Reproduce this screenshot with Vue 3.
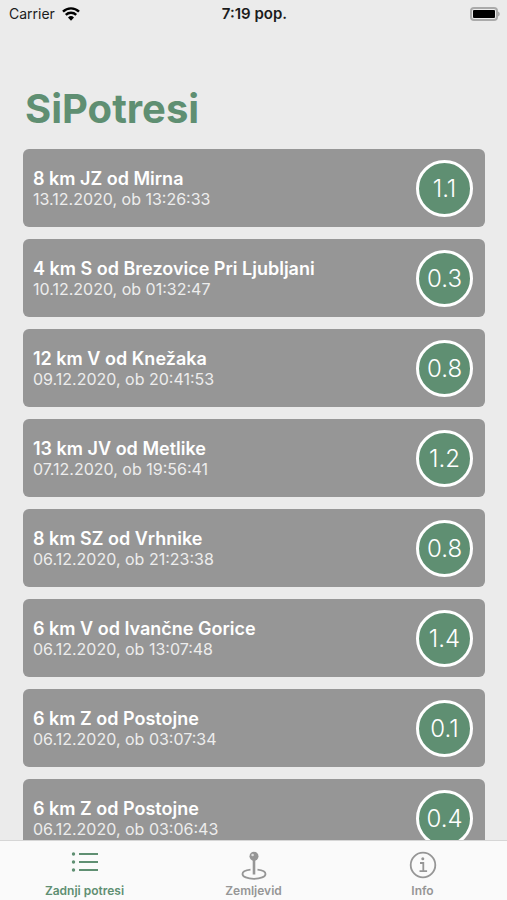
<script setup>
import { ref } from 'vue';

const quakes = [
  { place: '8 km JZ od Mirna', time: '13.12.2020, ob 13:26:33', magnitude: '1.1' },
  { place: '4 km S od Brezovice Pri Ljubljani', time: '10.12.2020, ob 01:32:47', magnitude: '0.3' },
  { place: '12 km V od Knežaka', time: '09.12.2020, ob 20:41:53', magnitude: '0.8' },
  { place: '13 km JV od Metlike', time: '07.12.2020, ob 19:56:41', magnitude: '1.2' },
  { place: '8 km SZ od Vrhnike', time: '06.12.2020, ob 21:23:38', magnitude: '0.8' },
  { place: '6 km V od Ivančne Gorice', time: '06.12.2020, ob 13:07:48', magnitude: '1.4' },
  { place: '6 km Z od Postojne', time: '06.12.2020, ob 03:07:34', magnitude: '0.1' },
  { place: '6 km Z od Postojne', time: '06.12.2020, ob 03:06:43', magnitude: '0.4' },
];

const tabs = [
  { id: 'list', label: 'Zadnji potresi' },
  { id: 'map', label: 'Zemljevid' },
  { id: 'info', label: 'Info' },
];

const active = ref('list');
</script>

<template>
  <div class="app">
    <header class="status">
      <div class="carrier">
        <span>Carrier</span>
        <svg class="wifi" viewBox="0 0 18 14" aria-hidden="true">
          <path d="M1 4.700a11.400 11.400 0 0 1 16 0" />
          <path d="M3.800 7.900a7.400 7.400 0 0 1 10.400 0" />
          <path class="wifi-dot" d="M9 13.800l-3-3.300a4.300 4.300 0 0 1 6 0z" />
        </svg>
      </div>
      <span class="clock">7:19 pop.</span>
      <svg class="battery" viewBox="0 0 30 14" aria-hidden="true">
        <rect class="battery-case" x="1" y="1" width="26" height="12" rx="3" />
        <rect x="3" y="3" width="22" height="8" rx="1" />
        <path class="battery-tip" d="M28 4.500c2.400 1 2.400 4 0 5z" />
      </svg>
    </header>

    <main class="content">
      <h1 class="title">SiPotresi</h1>
      <ul class="list">
        <li v-for="quake of quakes" :key="quake.time" class="card">
          <div class="details">
            <h2 class="place">{{ quake.place }}</h2>
            <time class="time">{{ quake.time }}</time>
          </div>
          <span class="magnitude">{{ quake.magnitude }}</span>
        </li>
      </ul>
    </main>

    <nav class="tabs">
      <button
        v-for="tab of tabs"
        :key="tab.id"
        type="button"
        class="tab"
        :class="{ active: active === tab.id }"
        @click="active = tab.id"
      >
        <svg v-if="tab.id === 'list'" class="icon" viewBox="0 0 32 32" aria-hidden="true">
          <g class="fill">
            <circle cx="4.500" cy="5" r="1.700" />
            <circle cx="4.500" cy="13" r="1.700" />
            <circle cx="4.500" cy="21" r="1.700" />
          </g>
          <path d="M10 5h19M10 13h19M10 21h19" />
        </svg>
        <svg v-else-if="tab.id === 'map'" class="icon" viewBox="0 0 32 32" aria-hidden="true">
          <path d="M12.500 20.700c-4.700.5-8 1.900-8 4.300 0 2.800 5 4.800 11.500 4.800s11.500-2 11.500-4.800c0-2.400-3.300-3.800-8-4.300" />
          <path class="pin" d="M16 10v15.500" />
          <circle class="fill" cx="16" cy="7.300" r="4.500" />
          <circle class="shine" cx="14.600" cy="6" r="1.300" />
        </svg>
        <svg v-else class="icon" viewBox="0 0 32 32" aria-hidden="true">
          <circle cx="16" cy="16" r="12.300" />
          <circle class="fill" cx="15.800" cy="9.800" r="1.500" />
          <path d="M13 14h3.300v8M12.500 22.200h7.600" />
        </svg>
        <span class="label">{{ tab.label }}</span>
      </button>
    </nav>
  </div>
</template>

<style>
body {
  background: #ebebeb;
}
</style>

<style scoped>
.app {
  display: flex;
  flex-direction: column;
  height: 100vh;
  background: #ebebeb;
  font-family: Inter, 'Liberation Sans', sans-serif;
}

.status {
  display: grid;
  grid-template-columns: 1fr auto 1fr;
  align-items: center;
  flex: none;
  height: 27px;
  padding: 0 7px 0 9px;
  color: #1c1c1c;
  font-size: 14px;
}

.carrier {
  display: flex;
  align-items: center;
  gap: 7px;
}

.wifi {
  width: 18px;
  height: 14px;
  fill: none;
  stroke: #000;
  stroke-width: 2.4;
}

.wifi-dot {
  fill: #000;
  stroke: none;
}

.clock {
  font-size: 15px;
  font-weight: 600;
}

.battery {
  justify-self: end;
  width: 30px;
  height: 14px;
}

.battery-case {
  fill: none;
  stroke: #aaa;
  stroke-width: 2;
}

.battery-tip {
  fill: #aaa;
}

.content {
  flex: 1;
  min-height: 0;
  padding: 57px 22px 0 23px;
  overflow-y: auto;
  scrollbar-width: none;
}

.title {
  margin: 0 0 15px 2px;
  color: #5f8f72;
  font-size: 40px;
  font-weight: 700;
  line-height: 50px;
}

.list {
  display: flex;
  flex-direction: column;
  gap: 12px;
  margin: 0;
  padding: 0;
  list-style: none;
}

.card {
  display: flex;
  align-items: center;
  justify-content: space-between;
  box-sizing: border-box;
  height: 78px;
  padding: 0 12px 0 10px;
  border-radius: 6px;
  background: #969696;
  color: #fff;
}

.details {
  padding-top: 2px;
}

.place {
  margin: 0;
  font-size: 18px;
  font-weight: 600;
  line-height: 20px;
}

.time {
  display: block;
  color: #ededed;
  font-size: 16px;
  line-height: 20px;
}

.magnitude {
  display: flex;
  align-items: center;
  justify-content: center;
  flex: none;
  box-sizing: border-box;
  width: 57px;
  height: 57px;
  border: 3px solid #fff;
  border-radius: 50%;
  background: #5f8f72;
  font-size: 24px;
  font-weight: 300;
}

.tabs {
  display: grid;
  grid-template-columns: repeat(3, 1fr);
  flex: none;
  border-top: 1px solid #d6d6d6;
  background: #fafafa;
}

.tab {
  display: flex;
  flex-direction: column;
  align-items: center;
  padding: 8px 0 0;
  border: 0;
  background: none;
  color: #969696;
  font: inherit;
}

.active {
  color: #5f8f72;
}

.icon {
  width: 32px;
  height: 32px;
  fill: none;
  stroke: currentColor;
  stroke-width: 1.8;
}

.fill {
  fill: currentColor;
  stroke: none;
}

.pin {
  stroke-width: 2.6;
}

.shine {
  fill: #ddd;
  stroke: none;
}

.label {
  padding-top: 1px;
  font-size: 12px;
  font-weight: 600;
  line-height: 18px;
}
</style>
